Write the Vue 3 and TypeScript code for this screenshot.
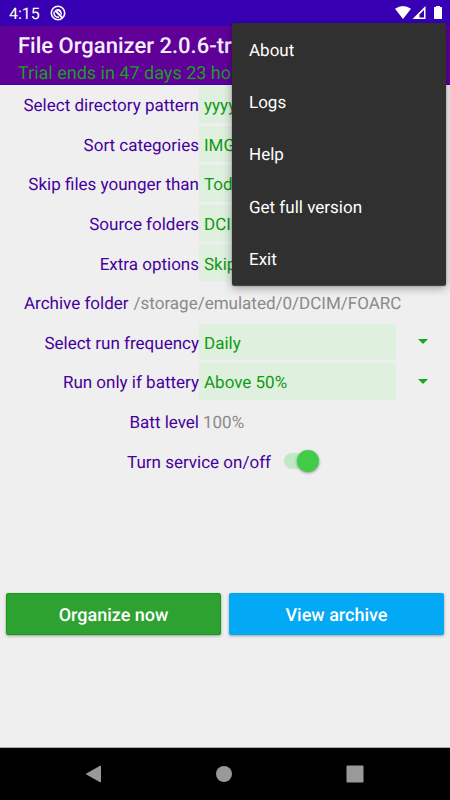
<script setup lang="ts">
import { ref } from 'vue'

interface Setting {
  id: string
  label: string
  value: string
  options: string[]
}

const settings = ref<Setting[]>([
  { id: 'pattern', label: 'Select directory pattern', value: 'yyyy/MM', options: ['yyyy/MM', 'yyyy'] },
  { id: 'categories', label: 'Sort categories', value: 'IMG, VID', options: ['IMG, VID', 'IMG'] },
  { id: 'younger', label: 'Skip files younger than', value: 'Today', options: ['Today', 'Week'] },
  { id: 'source', label: 'Source folders', value: 'DCIM', options: ['DCIM'] },
  { id: 'extra', label: 'Extra options', value: 'Skip', options: ['Skip', 'None'] },
])

const schedule = ref<Setting[]>([
  { id: 'frequency', label: 'Select run frequency', value: 'Daily', options: ['Daily', 'Weekly'] },
  { id: 'battery', label: 'Run only if battery', value: 'Above 50%', options: ['Above 50%', 'Any level'] },
])

const menu: string[] = ['About', 'Logs', 'Help', 'Get full version', 'Exit']
const serviceOn = ref(true)
</script>

<template>
  <div class="screen">
    <div class="status">
      <span class="clock">4:15</span>
      <svg class="app-mark" width="16" height="16" viewBox="0 0 16 16" aria-hidden="true">
        <circle cx="8" cy="8" r="6.7" fill="none" stroke="#fff" stroke-width="1.6" />
        <path d="M4.300 6.500A4 4 0 0 0 9 12" fill="none" stroke="#fff" stroke-width="1.400" />
        <path d="M5.500 4.800Q8.500 3 11 5.500Q12.500 8 11.500 10.500Z" fill="#fff" />
        <path d="M5 5.500L12 12.500" stroke="#fff" stroke-width="1.800" />
        <path d="M8 6.200L10.500 8.500" stroke="#3700b3" stroke-width="1" />
      </svg>
      <svg class="signals" width="48" height="16" viewBox="0 0 48 16" aria-hidden="true">
        <path d="M0 3.8Q8 -2 16 3.8L8 14Z" fill="#fff" />
        <path d="M30.500 1V14H17.500Z" fill="#fff" />
        <path d="M29 5V12.500H24.500V9.500Z" fill="#3700b3" />
        <path d="M41 1h4v1h1.500q.5 0 .5.500v11q0 .5-.5.500h-7q-.5 0-.5-.5v-11q0-.5.5-.5H41Z" fill="#fff" />
      </svg>
    </div>

    <header class="header">
      <h1 class="title">File Organizer 2.0.6-trial</h1>
      <p class="trial">Trial ends in 47 days 23 hours</p>
    </header>

    <main class="content">
      <form class="form" @submit.prevent>
        <div v-for="item in settings" :key="item.id" class="row">
          <label class="label" :for="item.id">{{ item.label }}</label>
          <select :id="item.id" v-model="item.value" class="field">
            <option v-for="option in item.options" :key="option">{{ option }}</option>
          </select>
        </div>
        <div class="row path-row">
          <span class="label">Archive folder</span>
          <span class="value">/storage/emulated/0/DCIM/FOARC</span>
        </div>
        <div v-for="item in schedule" :key="item.id" class="row">
          <label class="label" :for="item.id">{{ item.label }}</label>
          <select :id="item.id" v-model="item.value" class="field">
            <option v-for="option in item.options" :key="option">{{ option }}</option>
          </select>
          <svg class="caret" width="10" height="5" viewBox="0 0 10 5" aria-hidden="true">
            <path d="M0 0H10L5 5Z" fill="#15a81b" />
          </svg>
        </div>
        <div class="row">
          <span class="label">Batt level</span>
          <span class="value inset">100%</span>
        </div>
        <div class="row switch-row">
          <label class="label" for="service">Turn service on/off</label>
          <input id="service" v-model="serviceOn" class="switch" type="checkbox" role="switch" />
        </div>
      </form>

      <div class="actions">
        <button class="action organize" type="button">Organize now</button>
        <button class="action archive" type="button">View archive</button>
      </div>
    </main>

    <nav class="navbar">
      <button class="nav-button" type="button" aria-label="Back">
        <svg width="18" height="18" viewBox="0 0 18 18"><path d="M1.500 9L16 .8q1-.4 1 .6v15.200q0 1-1 .6Z" fill="#999" /></svg>
      </button>
      <button class="nav-button" type="button" aria-label="Home">
        <svg width="18" height="18" viewBox="0 0 18 18"><circle cx="9" cy="9" r="8" fill="#999" /></svg>
      </button>
      <button class="nav-button" type="button" aria-label="Recent apps">
        <svg width="18" height="18" viewBox="0 0 18 18"><rect x=".5" y=".5" width="17" height="17" rx="1" fill="#999" /></svg>
      </button>
    </nav>

    <div class="menu" role="menu">
      <button v-for="entry in menu" :key="entry" class="menu-item" type="button" role="menuitem">{{ entry }}</button>
    </div>
  </div>
</template>

<style>
body {
  margin: 0;
}
</style>

<style scoped>
.screen {
  position: relative;
  display: flex;
  flex-direction: column;
  min-height: 100vh;
  overflow: hidden;
  background: #efefef;
  font-family: Roboto, 'Liberation Sans', sans-serif;
  font-size: 17px;
  line-height: 24px;
  text-rendering: geometricPrecision;
}

.status {
  display: flex;
  align-items: center;
  height: 26px;
  padding: 0 7px 0 9px;
  background: #3700b3;
  color: #fff;
}

.clock {
  padding-top: 2px;
  font-size: 16px;
}

.app-mark {
  margin-left: 10px;
}

.signals {
  margin-left: auto;
}

.header {
  box-sizing: border-box;
  height: 59px;
  padding: 7px 18px 0;
  border-bottom: 1px solid #3700b3;
  background: #600099;
  white-space: nowrap;
}

.title {
  margin: 0;
  color: #f4effa;
  font-size: 22px;
  font-weight: 500;
  line-height: 28px;
}

.trial {
  margin: 0;
  color: #1e9c22;
  font-size: 18px;
  line-height: 25px;
}

.content {
  display: flex;
  flex: 1;
  flex-direction: column;
}

.form {
  display: grid;
  grid-template-rows: repeat(10, 1fr);
  gap: 3px;
  height: 393px;
  margin-top: 1px;
}

.row {
  display: grid;
  grid-template-columns: 199fr 197fr 54fr;
  align-items: center;
}

.label {
  padding-top: 4px;
  color: #46009c;
  text-align: right;
  white-space: nowrap;
}

.field {
  align-self: stretch;
  min-width: 0;
  padding: 4px 5px 0;
  border: 0;
  border-radius: 0;
  appearance: none;
  background: #dff0df;
  color: #109a14;
  font: inherit;
  text-rendering: inherit;
}

.caret {
  justify-self: center;
}

.value {
  padding-top: 4px;
  color: #8a8a8a;
  white-space: nowrap;
}

.inset {
  padding-left: 4px;
}

.path-row {
  display: flex;
  gap: 5px;
  padding-left: 24px;
}

.switch-row {
  display: flex;
  justify-content: center;
  gap: 13px;
  padding-right: 4px;
}

.switch {
  display: grid;
  align-items: center;
  width: 35px;
  height: 22px;
  margin: 0;
  appearance: none;
}

.switch::before,
.switch::after {
  grid-area: 1 / 1;
  border-radius: 11px;
  content: '';
}

.switch::before {
  height: 16px;
  background: #c2e9c4;
}

.switch::after {
  width: 22px;
  height: 22px;
  background: #ececec;
  box-shadow: 0 1px 3px rgb(0 0 0 / 40%);
}

.switch:checked::after {
  justify-self: end;
  background: #41cc47;
}

.actions {
  display: grid;
  grid-template-columns: 1fr 1fr;
  gap: 8px;
  margin: 114px 6px 0;
}

.action {
  height: 42px;
  padding: 3px 0 0;
  border: 0;
  border-radius: 2px;
  box-shadow: 0 1px 3px rgb(0 0 0 / 35%);
  color: #fff;
  font: inherit;
  font-size: 18px;
  font-weight: 500;
  text-rendering: inherit;
}

.organize {
  border: 1px solid #159a1b;
  background: #2ea230;
}

.archive {
  background: #03a9f4;
}

.navbar {
  box-sizing: border-box;
  display: flex;
  align-items: center;
  justify-content: space-between;
  height: 53px;
  padding: 0 86px 0 84px;
  border-top: 1px solid #aaa;
  background: #000;
}

.nav-button {
  display: flex;
  padding: 0;
  border: 0;
  background: none;
}

.menu {
  position: absolute;
  top: 23px;
  right: 4px;
  display: grid;
  grid-template-rows: repeat(5, 1fr);
  width: 214px;
  height: 262px;
  border-radius: 2px;
  background: #303030;
  box-shadow: 0 3px 10px rgb(0 0 0 / 35%), 0 1px 1px rgb(0 0 0 / 70%);
}

.menu-item {
  padding: 3px 17px 0;
  border: 0;
  background: none;
  color: #fff;
  font: inherit;
  text-align: left;
  text-rendering: inherit;
}
</style>
